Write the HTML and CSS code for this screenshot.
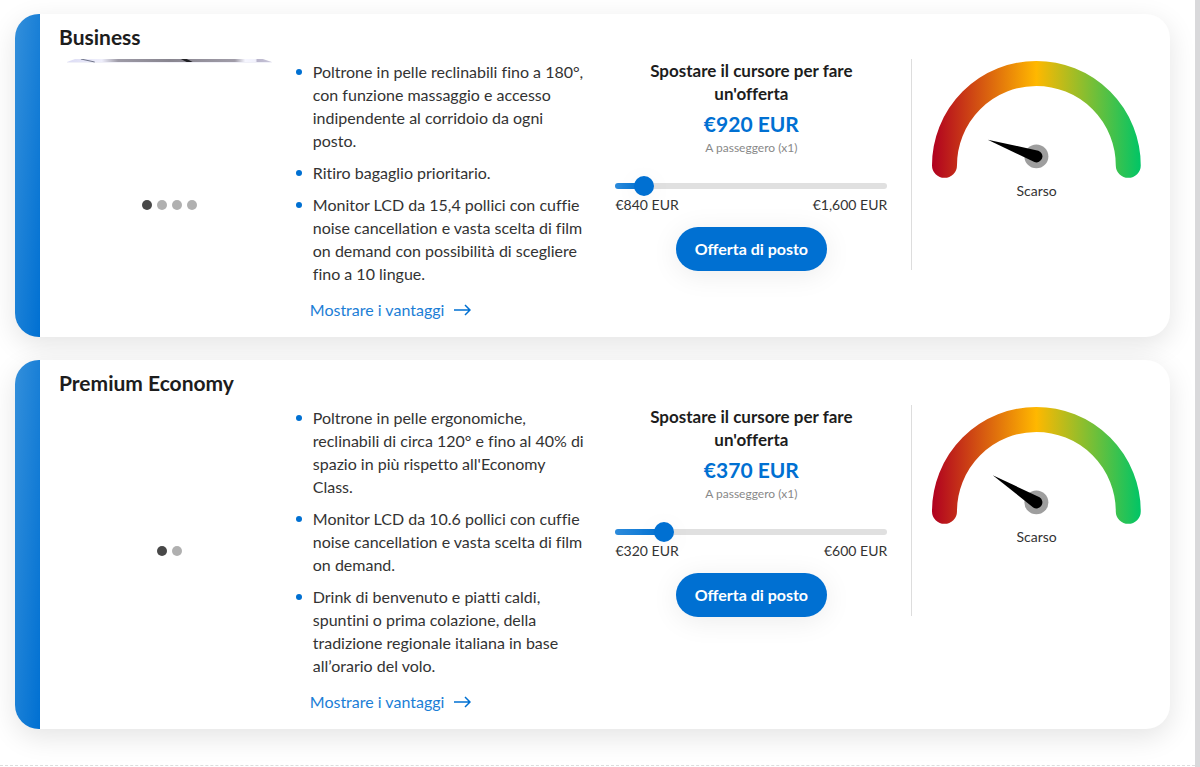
FILE: index.html
```html
<!DOCTYPE html>
<html lang="it">

<head>
    <meta charset="UTF-8" />
    <meta name="viewport" content="width=device-width, initial-scale=1" />
    <title>Offerta di posto</title>
    <link rel="stylesheet" href="styles.css">
</head>

<body>
    <main class="offers">
        <section class="card">
            <h2>Business</h2>
            <div class="card-body">
                <div class="carousel">
                    <svg class="photo" viewBox="0 0 207 4" preserveAspectRatio="none" aria-hidden="true">
                        <defs>
                            <linearGradient id="seat">
                                <stop offset="0" stop-color="#dcdcf4" />
                                <stop offset="0.17" stop-color="#eeeefb" />
                                <stop offset="0.25" stop-color="#9d9aa6" />
                                <stop offset="0.5" stop-color="#88858f" />
                                <stop offset="0.82" stop-color="#a09ca8" />
                                <stop offset="0.87" stop-color="#f6f6ff" />
                                <stop offset="0.92" stop-color="#f1f1fc" />
                                <stop offset="0.93" stop-color="#b9b5cb" />
                                <stop offset="1" stop-color="#c9c6da" />
                            </linearGradient>
                        </defs>
                        <path d="M8 0H198L207 3H0Z" fill="url(#seat)" />
                        <path d="M0 3H207V4H0Z" fill="#f0f0f8" />
                        <path d="M14 0L28 3" stroke="#6f7488" />
                        <path d="M115 0H121L127 3H121Z" fill="#202024" />
                    </svg>
                    <div class="dots">
                        <button class="dot active" aria-label="Foto 1"></button>
                        <button class="dot" aria-label="Foto 2"></button>
                        <button class="dot" aria-label="Foto 3"></button>
                        <button class="dot" aria-label="Foto 4"></button>
                    </div>
                </div>

                <div class="benefits">
                    <ul>
                        <li>Poltrone in pelle reclinabili fino a 180°, con funzione massaggio e accesso indipendente al corridoio da ogni posto.</li>
                        <li>Ritiro bagaglio prioritario.</li>
                        <li>Monitor LCD da 15,4 pollici con cuffie noise cancellation e vasta scelta di film on demand con possibilità di scegliere fino a 10 lingue.</li>
                    </ul>
                    <a href="#">Mostrare i vantaggi
                        <svg width="17" height="12" viewBox="0 0 17 12" aria-hidden="true"><path d="M0 6H16M11 1L16 6L11 11" /></svg>
                    </a>
                </div>

                <div class="bid">
                    <label for="bidBusiness">Spostare il cursore per fare un'offerta</label>
                    <p class="price">€920 EUR</p>
                    <p class="per">A passeggero (x1)</p>
                    <div class="slider" style="--fill: 10.5%">
                        <input type="range" id="bidBusiness" min="840" max="1600" step="10" value="920" />
                    </div>
                    <div class="limits"><span>€840 EUR</span><span>€1,600 EUR</span></div>
                    <button class="submit" type="button">Offerta di posto</button>
                </div>

                <div class="gauge">
                    <svg viewBox="0 0 209 118" aria-hidden="true">
                        <defs>
                            <linearGradient id="strength" gradientUnits="userSpaceOnUse" x1="0" x2="209" y1="0" y2="0">
                                <stop offset="0" stop-color="#b00020" />
                                <stop offset="0.5" stop-color="#ffb800" />
                                <stop offset="1" stop-color="#00c566" />
                            </linearGradient>
                        </defs>
                        <path class="arc" d="M12.500 104.500A92 92 0 0 1 196.500 104.500" />
                        <circle class="hub" cx="104.500" cy="95.500" r="12" />
                        <path class="needle" transform="rotate(19 104.5 95.5)" d="M53 95.500L104.500 89.500A6 6 0 0 1 104.500 101.500Z" />
                    </svg>
                    <p>Scarso</p>
                </div>
            </div>
        </section>

        <section class="card">
            <h2>Premium Economy</h2>
            <div class="card-body">
                <div class="carousel">
                    <div class="dots">
                        <button class="dot active" aria-label="Foto 1"></button>
                        <button class="dot" aria-label="Foto 2"></button>
                    </div>
                </div>

                <div class="benefits">
                    <ul>
                        <li>Poltrone in pelle ergonomiche, reclinabili di circa 120° e fino al 40% di spazio in più rispetto all'Economy Class.</li>
                        <li>Monitor LCD da 10.6 pollici con cuffie noise cancellation e vasta scelta di film on demand.</li>
                        <li>Drink di benvenuto e piatti caldi, spuntini o prima colazione, della tradizione regionale italiana in base all’orario del volo.</li>
                    </ul>
                    <a href="#">Mostrare i vantaggi
                        <svg width="17" height="12" viewBox="0 0 17 12" aria-hidden="true"><path d="M0 6H16M11 1L16 6L11 11" /></svg>
                    </a>
                </div>

                <div class="bid">
                    <label for="bidPremium">Spostare il cursore per fare un'offerta</label>
                    <p class="price">€370 EUR</p>
                    <p class="per">A passeggero (x1)</p>
                    <div class="slider" style="--fill: 17.9%">
                        <input type="range" id="bidPremium" min="320" max="600" step="10" value="370" />
                    </div>
                    <div class="limits"><span>€320 EUR</span><span>€600 EUR</span></div>
                    <button class="submit" type="button">Offerta di posto</button>
                </div>

                <div class="gauge">
                    <svg viewBox="0 0 209 118" aria-hidden="true">
                        <path class="arc" d="M12.500 104.500A92 92 0 0 1 196.500 104.500" />
                        <circle class="hub" cx="104.500" cy="95.500" r="12" />
                        <path class="needle" transform="rotate(32 104.5 95.5)" d="M53 95.500L104.500 89.500A6 6 0 0 1 104.500 101.500Z" />
                    </svg>
                    <p>Scarso</p>
                </div>
            </div>
        </section>
    </main>
</body>

</html>
```
FILE: styles.css
```css
* {
    box-sizing: border-box;
}

body {
    margin: 0;
    min-height: 100vh;
    border-right: 5px solid #d9d9db;
    background: #fff;
    color: #333;
    font-family: "Avenir Next", Avenir, Lato, sans-serif;
    font-size: 16px;
    line-height: 23px;
    font-variant-ligatures: no-common-ligatures;
}

h2,
p,
ul {
    margin: 0;
    padding: 0;
}

.offers {
    display: flex;
    flex-direction: column;
    gap: 23px;
    padding: 14px 25px 36px 15px;
    border-bottom: 1px dashed #ddd;
}

.card {
    padding: 9px 29px 16px 44px;
    border-radius: 24px;
    background: linear-gradient(to bottom right, #338fdb, #0070d2) left / 25px 100% no-repeat #fff;
    box-shadow: 0 8px 28px rgba(0, 0, 0, 0.11);
}

.card h2 {
    color: #1d1d1d;
    font-size: 21px;
    line-height: 28px;
}

.card-body {
    display: grid;
    grid-template-columns: 213fr 296fr 272fr 230fr;
    gap: 24px;
    align-items: start;
    padding-top: 8px;
}

.carousel {
    display: flex;
    flex-direction: column;
    justify-content: space-between;
    height: 151px;
    padding-left: 8px;
}

.photo {
    width: 100%;
    height: 4px;
}

.dots {
    display: flex;
    justify-content: center;
    gap: 5px;
    margin-top: auto;
}

.dot {
    width: 10px;
    height: 10px;
    padding: 0;
    border: none;
    border-radius: 50%;
    background: #b0b0b0;
}

.dot.active {
    background: #484848;
}

.benefits ul {
    display: flex;
    flex-direction: column;
    gap: 9px;
    padding: 1px 6px 0 0;
    list-style: none;
}

.benefits li {
    display: flex;
    gap: 11px;
}

.benefits li::before {
    content: "";
    flex: none;
    width: 6px;
    height: 6px;
    margin-top: 9px;
    border-radius: 50%;
    background: #0070d2;
}

.benefits a {
    display: flex;
    align-items: center;
    gap: 10px;
    margin: 13px 0 0 14px;
    color: #1b7ed6;
    text-decoration: none;
}

.benefits a svg {
    fill: none;
    stroke: #0070d2;
    stroke-width: 1.5;
}

.bid {
    display: flex;
    flex-direction: column;
    align-items: center;
    text-align: center;
}

.bid label {
    max-width: 240px;
    color: #1d1d1d;
    font-size: 17px;
    font-weight: bold;
}

.price {
    margin-top: 5px;
    color: #0070d2;
    font-size: 21px;
    font-weight: bold;
    line-height: 28px;
}

.per {
    color: #888;
    font-size: 12px;
    line-height: 20px;
}

.slider {
    align-self: stretch;
    height: 6px;
    margin-top: 25px;
    border-radius: 3px;
    background: linear-gradient(90deg, #2c8bdb, #0070d2) left / var(--fill) 100% no-repeat #e0e0e0;
}

/* the input overhangs the track so that the thumb is centred on the end of the fill */
.slider input {
    display: block;
    width: calc(100% + 20px);
    height: 20px;
    margin: -7px -10px;
    appearance: none;
    background: none;
}

.slider input::-webkit-slider-thumb {
    appearance: none;
    width: 20px;
    height: 20px;
    border-radius: 50%;
    background: #0070d2;
    box-shadow: 0 4px 24px rgba(0, 0, 0, 0.06);
}

.limits {
    align-self: stretch;
    display: flex;
    justify-content: space-between;
    margin-top: 6px;
    font-size: 14px;
    line-height: 20px;
}

.submit {
    height: 44px;
    margin-top: 12px;
    padding: 0 19px 2px;
    border: none;
    border-radius: 22px;
    background: #0070d2;
    box-shadow: 0 4px 28px rgba(0, 0, 0, 0.08);
    color: #fff;
    font: bold 16px "Avenir Next", Avenir, Lato, sans-serif;
    cursor: pointer;
}

.gauge {
    min-height: 211px;
    padding: 2px 0 0 20px;
    border-left: 1px solid #ddd;
    text-align: center;
}

.gauge svg {
    display: block;
    width: 100%;
}

.gauge p {
    font-size: 14px;
}

.arc {
    fill: none;
    stroke: url(#strength);
    stroke-width: 25;
    stroke-linecap: round;
}

.hub {
    fill: #9e9e9e;
}

.needle {
    fill: #000;
}
```
